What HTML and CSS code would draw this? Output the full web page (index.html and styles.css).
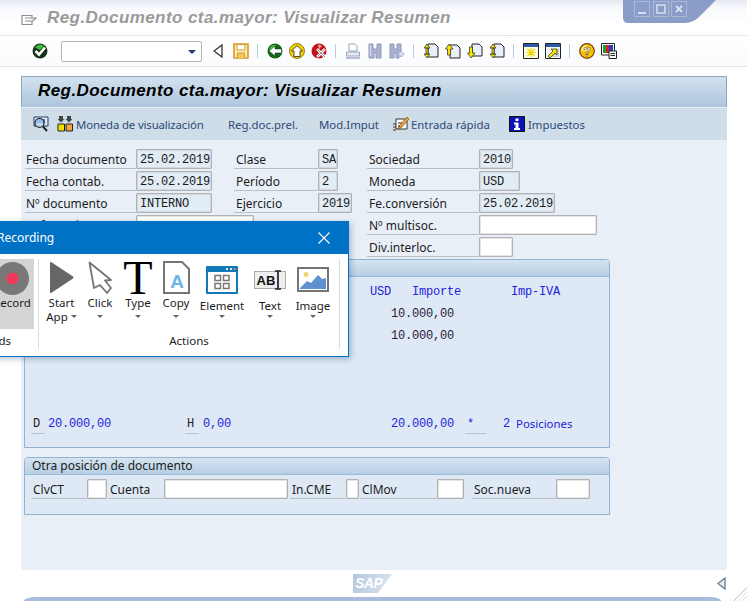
FILE: index.html
```html
<!DOCTYPE html>
<html lang="es">
<head>
  <meta charset="UTF-8">
  <title>Reg.Documento cta.mayor: Visualizar Resumen</title>
  <link rel="stylesheet" href="styles.css">
</head>
<body>
  <svg class="win-controls" width="100" height="24" viewBox="0 0 100 24">
    <path d="M1 0H94L76 18Q70 23 62 23H6Q1 23 1 18Z" fill="#8a9dc8"/>
    <g fill="none" stroke="#a9b7d8">
      <rect x="12.5" y="1.5" width="15" height="15"/>
      <rect x="31.5" y="1.5" width="15" height="15"/>
      <rect x="49.5" y="1.5" width="15" height="15"/>
    </g>
    <path d="M16 13H24" stroke="#d8dfee" stroke-width="2"/>
    <rect x="35" y="5" width="8" height="8" fill="none" stroke="#d8dfee" stroke-width="1.5"/>
    <path d="M54 6L60 12M60 6L54 12" stroke="#d8dfee" stroke-width="2"/>
  </svg>

  <div class="titlebar">
    <svg class="title-icon" width="16" height="12" viewBox="0 0 16 12"><path d="M1 1.5H11V4H15L11 7.5V10.5H1ZM4 4H11M4 7H11" fill="none" stroke="#8f8f8f" stroke-width="1.2"/></svg>
    <span class="title-text">Reg.Documento cta.mayor: Visualizar Resumen</span>
  </div>

  <div class="toolbar">
    <svg class="ico ok-btn" viewBox="0 0 16 16"><circle cx="8" cy="8" r="7.5" fill="#17331a"/><path d="M3 4.5A6 6 0 0 1 12 3L8 7Z" fill="#3ebd3e"/><path d="M3.5 8L7 11.5L13 4.5" fill="none" stroke="#fff" stroke-width="2.6"/></svg>
    <div class="combo"><span class="combo-arrow"></span></div>
    <svg class="ico nav-back" viewBox="0 0 10 14"><path d="M9 1V13L1 7Z" fill="#fff" stroke="#333" stroke-width="1.3"/></svg>
    <svg class="ico save-btn" viewBox="0 0 16 16"><path d="M1 1H15V15H1Z" fill="#fbe9b0" stroke="#d99a2a" stroke-width="1.6"/><path d="M4 1.5H12V7H4Z" fill="#fff" stroke="#d99a2a"/><path d="M4.5 15V10H11.5V15" fill="#f3c766" stroke="#d99a2a"/></svg>
    <span class="sep"></span>
    <div class="tb-group">
      <svg class="ico" viewBox="0 0 16 16"><circle cx="8" cy="8" r="7.5" fill="#0f6a12"/><path d="M2 8A6 6 0 0 1 9 2L6 6Z" fill="#4cc04c"/><path d="M2 8L8 3V6H14.5V10H8V13Z" fill="#fff" stroke="#123" stroke-width=".5"/></svg>
      <svg class="ico" viewBox="0 0 16 16"><circle cx="8" cy="8" r="7.5" fill="#f5d000" stroke="#7a6a00" stroke-width=".8"/><path d="M8 2.5L13.5 8H11V13.5H5V8H2.5Z" fill="#fff" stroke="#222" stroke-width=".8"/></svg>
      <svg class="ico" viewBox="0 0 16 16"><circle cx="8" cy="8" r="7.5" fill="#c4121c"/><path d="M7 1.5A6 6 0 0 1 11 3L8 6Z" fill="#f8a0a0"/><path d="M6 6L14 14M14 6L6 14" stroke="#fff" stroke-width="2.6"/><path d="M6 6L14 14M14 6L6 14" stroke="#555" stroke-width=".6"/></svg>
    </div>
    <span class="sep"></span>
    <div class="tb-group">
      <svg class="ico" viewBox="0 0 16 16"><path d="M4 1H10L12 3V8H4Z" fill="#fff" stroke="#9aa3c0"/><path d="M1.5 9H14.5V13H1.5Z" fill="#e6e9f3" stroke="#9aa3c0"/><path d="M1 15H15" stroke="#9aa3c0" stroke-width="1.4"/></svg>
      <svg class="ico" viewBox="0 0 16 16"><path d="M2 1H6V6H10V1H14V15H9V10H7V15H2Z" fill="#a9b2d0" stroke="#8f99bc"/><path d="M3.5 2V13" stroke="#dfe3f0"/></svg>
      <svg class="ico" viewBox="0 0 16 16"><path d="M1 1H5V6H8V1H12V8H10V15H7V10H5V15H1Z" fill="#a9b2d0" stroke="#8f99bc"/><path d="M12 8V14M9 11H15" stroke="#a9b2d0" stroke-width="2.6"/><path d="M12 9V13M10 11H14" stroke="#eef0f7" stroke-width="1"/></svg>
    </div>
    <span class="sep"></span>
    <div class="tb-group">
      <svg class="ico" viewBox="0 0 16 16"><path d="M5 1H12L15 4V14H5Z" fill="#e9f0fb" stroke="#222"/><path d="M4 1L7 5H1ZM4 15L7 11H1ZM3 5H5V11H3Z" fill="#f6e600" stroke="#222" stroke-width=".7"/></svg>
      <svg class="ico" viewBox="0 0 16 16"><path d="M5 2H12L15 5V15H5Z" fill="#e9f0fb" stroke="#222"/><path d="M4 1L8 6H5.500V12H2.500V6H0.500Z" fill="#f6e600" stroke="#222" stroke-width=".7"/></svg>
      <svg class="ico" viewBox="0 0 16 16"><path d="M5 1H12L15 4V13H5Z" fill="#e9f0fb" stroke="#222"/><path d="M4 15L8 10H5.500V4H2.500V10H0.500Z" fill="#f6e600" stroke="#222" stroke-width=".7"/></svg>
      <svg class="ico" viewBox="0 0 16 16"><path d="M5 1H12L15 4V14H5Z" fill="#e9f0fb" stroke="#222"/><path d="M4 1L7 5H1ZM4 15L7 11H1ZM3 5H5V11H3Z" fill="#f6e600" stroke="#222" stroke-width=".7"/></svg>
    </div>
    <span class="sep"></span>
    <div class="tb-group">
      <svg class="ico" viewBox="0 0 16 16"><path d="M.5.5H15.500V15.500H.5Z" fill="#fffde0" stroke="#222"/><path d="M1 1H15V4H1Z" fill="#2a5caa"/><path d="M8 5V14M3.500 9.500H12.500M4.500 6L11.500 13M11.500 6L4.500 13" stroke="#efd400" stroke-width="1.2"/></svg>
      <svg class="ico" viewBox="0 0 16 16"><path d="M.5.5H15.500V15.500H.5Z" fill="#f4f6fa" stroke="#222"/><path d="M1 1H15V4H1Z" fill="#2a5caa"/><path d="M10 6H14V14H6V12Z" fill="#cfd3d8"/><path d="M3 13L8 8L6 6H12V12L10 10L5 15Z" fill="#f6e600" stroke="#222" stroke-width=".7"/></svg>
    </div>
    <span class="sep"></span>
    <div class="tb-group">
      <svg class="ico" viewBox="0 0 16 16"><circle cx="8" cy="8" r="7.300" fill="#f5c400" stroke="#7a3c00" stroke-width="1.200"/><path d="M2 8A6 6 0 0 1 8 2V8Z" fill="#fdf08a"/><text x="8" y="13" class="help-q">?</text></svg>
      <svg class="ico" viewBox="0 0 16 16"><path d="M.5.5H13.500V12H.5Z" fill="#fff" stroke="#222"/><path d="M2 2H5V10H2Z" fill="#14a02a"/><path d="M5 2H8V10H5Z" fill="#e01b1b"/><path d="M8 2H12V10H8Z" fill="#1f3fd0"/><path d="M8 8H15.500V15.500H8Z" fill="#fff" stroke="#222"/><path d="M9.500 10.500H14M9.500 12.500H14" stroke="#222"/></svg>
    </div>
  </div>

  <div class="main">
    <div class="main-head">Reg.Documento cta.mayor: Visualizar Resumen</div>
    <div class="subbar">
      <svg class="ico sub-search" viewBox="0 0 16 16"><path d="M1 1H15V10H1Z" fill="#dfe8f2" stroke="#26405f"/><path d="M3 3H12V7H3Z" fill="#3d7fd0"/><circle cx="6.500" cy="7" r="4.500" fill="#bcd8f5" fill-opacity=".7" stroke="#222" stroke-width="1.200"/><path d="M10 10.500L14 15" stroke="#222" stroke-width="2"/></svg>
      <svg class="ico sub-currency" viewBox="0 0 16 16"><path d="M2 0H6V3H7.500L4 6.500L.5 3H2ZM10 0H14V3H15.500L12 6.500L8.500 3H10Z" fill="#444"/><path d="M1 8H7.500V15H1Z" fill="#f7e000" stroke="#222"/><path d="M9 8H15.500V15H9Z" fill="#f0a83a" stroke="#222"/></svg>
      <span class="sub-link sub-moneda">Moneda de visualización</span>
      <span class="sub-link sub-prel">Reg.doc.prel.</span>
      <span class="sub-link sub-imput">Mod.Imput</span>
      <svg class="ico sub-entry" viewBox="0 0 16 16"><path d="M3 3H14V13H3Z" fill="#fff" stroke="#333"/><path d="M0 8H3M0 11H3M0 14H3" stroke="#333"/><path d="M6 10L14 1L16 3L8 12L5 13Z" fill="#e8a23a" stroke="#6b4a12" stroke-width=".6"/><path d="M5 7H9M5 10H7" stroke="#333"/></svg>
      <span class="sub-link sub-rapida">Entrada rápida</span>
      <svg class="ico sub-info" viewBox="0 0 16 16"><path d="M.5.5H15.500V15.500H.5Z" fill="#0b12b8" stroke="#111"/><path d="M6.500 2.500H9.500V5H6.500ZM5 6.500H9.500V12H11V14H5V12H6.500V8.500H5Z" fill="#fff"/></svg>
      <span class="sub-link">Impuestos</span>
    </div>

    <div class="fields">
      <div class="col col-a">
        <div class="fld"><span class="lbl lbl-a">Fecha documento</span><span class="box ro w76">25.02.2019</span></div>
        <div class="fld"><span class="lbl lbl-a">Fecha contab.</span><span class="box ro w76">25.02.2019</span></div>
        <div class="fld"><span class="lbl lbl-a">Nº documento</span><span class="box ro w76">INTERNO</span></div>
        <div class="fld"><span class="lbl lbl-a">Referencia</span><span class="box w118"></span></div>
      </div>
      <div class="col col-b">
        <div class="fld"><span class="lbl lbl-b">Clase</span><span class="box ro w20">SA</span></div>
        <div class="fld"><span class="lbl lbl-b">Período</span><span class="box ro w20">2</span></div>
        <div class="fld"><span class="lbl lbl-b">Ejercicio</span><span class="box ro w34">2019</span></div>
      </div>
      <div class="col col-c">
        <div class="fld"><span class="lbl lbl-c">Sociedad</span><span class="box ro w34">2010</span></div>
        <div class="fld"><span class="lbl lbl-c">Moneda</span><span class="box ro w41">USD</span></div>
        <div class="fld"><span class="lbl lbl-c">Fe.conversión</span><span class="box ro w76">25.02.2019</span></div>
        <div class="fld"><span class="lbl lbl-c">Nº multisoc.</span><span class="box w118"></span></div>
        <div class="fld"><span class="lbl lbl-c">Div.interloc.</span><span class="box w34"></span></div>
      </div>
    </div>

    <div class="panel panel-items">
      <div class="panel-head"></div>
      <div class="items">
        <div class="line line-head"><span class="c-usd">USD</span><span class="c-imp">Importe</span><span>Imp-IVA</span></div>
        <div class="line line-amount">10.000,00</div>
        <div class="line line-amount">10.000,00</div>
        <div class="line line-total">
          <span class="mark">D</span><span class="sum sum-d">20.000,00</span>
          <span class="mark">H</span><span class="sum sum-h">0,00</span>
          <span class="sum sum-all">20.000,00</span>
          <span class="mark mark-star">*</span>
          <span class="sum sum-n">2</span><span class="pos-text">Posiciones</span>
        </div>
      </div>
    </div>

    <div class="panel panel-other">
      <div class="panel-head">Otra posición de documento</div>
      <div class="other-row">
        <span class="lbl lbl-clv">ClvCT</span><span class="box w20"></span>
        <span class="lbl lbl-cuenta">Cuenta</span><span class="box w124"></span>
        <span class="lbl lbl-cme">In.CME</span><span class="box w13"></span>
        <span class="lbl lbl-mov">ClMov</span><span class="box w27"></span>
        <span class="lbl lbl-soc">Soc.nueva</span><span class="box w34"></span>
      </div>
    </div>
  </div>

  <div class="bottom">
    <div class="sap-logo">SAP</div>
    <svg class="bottom-arrow" width="9" height="13" viewBox="0 0 9 13"><path d="M8 1V12L1 6.500Z" fill="#e8eef5" stroke="#6d7a88" stroke-width="1.300"/></svg>
  </div>
  <div class="statusbar"></div>
  <div class="grip"></div>

  <!-- floating recorder window -->
  <div class="recorder">
    <div class="rec-title">
      <span class="rec-name">Recording</span>
      <svg class="rec-close" width="12" height="12" viewBox="0 0 12 12"><path d="M.5.5L11.500 11.500M11.500.5L.5 11.500" stroke="#fff" stroke-width="1.100"/></svg>
    </div>
    <div class="ribbon">
      <div class="rib-group rib-commands">
        <div class="rec-btn">
          <svg width="33" height="33" viewBox="0 0 33 33"><circle cx="16.500" cy="16.500" r="16.500" fill="#787878"/><circle cx="16.500" cy="16.500" r="6" fill="#ee3a58"/></svg>
          <span>Record</span>
        </div>
        <div class="rib-label rib-label-cmd">Commands</div>
      </div>
      <div class="rib-group rib-actions">
        <div class="rib-items">
          <div class="act w-start">
            <svg class="act-ico" width="25" height="33" viewBox="0 0 25 33"><path d="M1 2Q1 .5 2.500 1.200L24 15.500Q25 16.500 24 17.500L2.500 31.800Q1 32.500 1 31Z" fill="#666"/></svg>
            <span>Start<br>App<i class="caret caret-in"></i></span>
          </div>
          <div class="act w-std">
            <svg class="act-ico" width="24" height="33" viewBox="0 0 24 33"><path d="M1.500 1.500L6 27L12 24L19 32L23 27L17 19.500L23 19Z" fill="#fff" stroke="#757575" stroke-width="1.800" stroke-linejoin="round"/></svg>
            <span>Click</span><i class="caret"></i>
          </div>
          <div class="act w-std">
            <svg class="act-ico" width="30" height="33" viewBox="0 0 30 33"><text x="15" y="33" class="type-t">T</text></svg>
            <span>Type</span><i class="caret"></i>
          </div>
          <div class="act w-std">
            <svg class="act-ico" width="27" height="33" viewBox="0 0 27 33"><path d="M1 1H19L26 8V32H1Z" fill="#fff" stroke="#757575" stroke-width="2"/><text x="14" y="27" class="copy-a">A</text></svg>
            <span>Copy</span><i class="caret"></i>
          </div>
          <div class="act w-el low">
            <svg class="act-ico" width="32" height="28" viewBox="0 0 32 28"><rect width="32" height="28" rx="1" fill="#1279b8"/><rect x="2" y="6" width="28" height="20" fill="#fff"/><path d="M20 3H22M24 3H26" stroke="#cfe6f5" stroke-width="2"/><path d="M27.500 3H29.500" stroke="#e9748a" stroke-width="2"/><path d="M9 9.500H14.500V14.500H9ZM17.500 9.500H23V14.500H17.500ZM9 17.500H14.500V22.500H9ZM17.500 17.500H23V22.500H17.500Z" fill="none" stroke="#777" stroke-width="1.500"/></svg>
            <span>Element</span><i class="caret"></i>
          </div>
          <div class="act w-tx low">
            <svg class="act-ico" width="32" height="28" viewBox="0 0 32 28"><rect x=".5" y="5.500" width="31" height="17" fill="#eee" stroke="#aaa"/><text x="2.500" y="18.500" class="abi">AB</text><path d="M21 5H27M24 5V23M21 23H27" fill="none" stroke="#222" stroke-width="1.700"/></svg>
            <span>Text</span><i class="caret"></i>
          </div>
          <div class="act w-im low">
            <svg class="act-ico" width="32" height="28" viewBox="0 0 32 28"><rect x="1" y="2" width="30" height="23" fill="#fff" stroke="#757575" stroke-width="2"/><circle cx="9" cy="8.500" r="2.500" fill="#f0d470"/><path d="M3 22L10 15L14 17L21 9L25 13L29 12V23H3Z" fill="#5e90cf"/></svg>
            <span>Image</span><i class="caret"></i>
          </div>
        </div>
        <div class="rib-label">Actions</div>
      </div>
    </div>
  </div>
</body>
</html>
```

FILE: styles.css
```css
html, body {
  margin: 0;
  height: 601px;
}
body {
  position: relative;
  overflow: hidden;
  background: #fff;
  font-family: "Noto Sans", "DejaVu Sans", sans-serif;
  font-size: 12px;
  color: #1c1c1c;
}
svg {
  display: block;
}

/* window title */
.titlebar {
  height: 36px;
  box-sizing: border-box;
  border-bottom: 1px solid #e1e4ea;
  padding: 1px 0 0 21px;
  display: flex;
  align-items: center;
  background: linear-gradient(#e6e9f2 0, #f8f9fc 8px, #fff 24px);
}
.title-icon {
  margin-top: 3px;
}
.title-text {
  margin-left: 10px;
  font-family: "Liberation Sans", sans-serif;
  font-size: 17px;
  font-weight: bold;
  font-style: italic;
  letter-spacing: .42px;
  color: #9a9a9a;
  white-space: nowrap;
}
.win-controls {
  position: absolute;
  top: 0;
  left: 622px;
}

/* main toolbar */
.toolbar {
  height: 31px;
  box-sizing: border-box;
  border-bottom: 1px solid #e1e4ea;
  padding-left: 32px;
  display: flex;
  align-items: center;
  background: linear-gradient(#fff, #fafbfd);
}
.ico {
  width: 16px;
  height: 16px;
  flex: none;
}
.tb-group {
  display: flex;
  gap: 6px;
}
.sep {
  width: 1px;
  height: 14px;
  margin: 0 9px 0 8px;
  background: #b9cde0;
}
.combo {
  width: 141px;
  height: 21px;
  box-sizing: border-box;
  margin-left: 13px;
  border: 1px solid #b4b4b4;
  border-radius: 2px;
  background: #fff;
  position: relative;
}
.combo-arrow {
  position: absolute;
  right: 5px;
  top: 8px;
  border: 4px solid transparent;
  border-top: 4px solid #1f3a6b;
  border-bottom: 0;
}
.nav-back {
  width: 10px;
  height: 14px;
  margin-left: 11px;
}
.save-btn {
  margin-left: 10px;
}

/* content area */
.main {
  margin: 9px 20px 0 21px;
  height: 494px;
  box-sizing: border-box;
  background: #e8eff7;
  border-radius: 0 0 3px 3px;
}
.main-head {
  height: 31px;
  box-sizing: border-box;
  padding: 1px 0 0 16px;
  border: 1px solid #8ba6bf;
  border-bottom: 0;
  background: linear-gradient(#d3e2ef, #adc5dc);
  font-family: "Liberation Sans", sans-serif;
  font-size: 17px;
  font-weight: bold;
  font-style: italic;
  letter-spacing: .42px;
  line-height: 25px;
  color: #000;
  white-space: nowrap;
}
.subbar {
  height: 33px;
  box-sizing: border-box;
  border-top: 1px solid #e8eff6;
  padding-left: 12px;
  display: flex;
  align-items: center;
  background: #cfdde9;
  font-size: 11.4px;
}
.sub-link {
  flex: none;
  color: #2c4a78;
  white-space: nowrap;
}
.sub-currency {
  margin-left: 8px;
}
.sub-moneda {
  width: 152px;
  margin-left: 3px;
  letter-spacing: -.15px;
}
.sub-prel {
  width: 91px;
}
.sub-imput {
  width: 74px;
}
.sub-rapida {
  width: 98px;
  margin-left: 2px;
}
.sub-info {
  margin-right: 3px;
}

/* header fields */
.fields {
  display: flex;
  height: 110px;
  padding: 9px 0 0 4px;
}
.col-a {
  width: 209px;
}
.col-b {
  width: 133px;
}
.fld {
  display: flex;
  height: 20px;
  margin-bottom: 2px;
}
.lbl {
  flex: none;
  box-sizing: border-box;
  height: 20px;
  padding-left: 1px;
  border-bottom: 1px solid #b7c0c9;
  line-height: 21px;
  white-space: nowrap;
}
.lbl-a {
  width: 111px;
}
.lbl-b {
  width: 84px;
  padding-left: 2px;
}
.lbl-c {
  width: 112px;
  padding-left: 2px;
}
.box {
  flex: none;
  box-sizing: border-box;
  height: 20px;
  padding-left: 3px;
  border: 1px solid #b2b2b2;
  box-shadow: inset 0 0 0 1px #e4e4e4;
  border-radius: 1px;
  background: #fff;
  font-family: "Liberation Mono", monospace;
  font-size: 12px;
  letter-spacing: -.2px;
  line-height: 20px;
  color: #1a1a1a;
}
.box.ro {
  background: #e2ecf5;
  box-shadow: inset 0 0 0 1px #d4d8dc;
}
.w13 { width: 13px; }
.w20 { width: 20px; }
.w27 { width: 27px; }
.w34 { width: 34px; }
.w41 { width: 41px; }
.w76 { width: 76px; }
.w118 { width: 118px; }
.w124 { width: 124px; }

/* framed panels */
.panel {
  width: 586px;
  box-sizing: border-box;
  margin-left: 3px;
  border: 1px solid #94b2d2;
  border-radius: 4px 4px 0 0;
  background: #dfe9f5;
}
.panel-head {
  height: 17px;
  box-sizing: border-box;
  border-bottom: 1px solid #9db8d3;
  border-radius: 3px 3px 0 0;
  padding-left: 7px;
  background: linear-gradient(#d6e4f0, #b6cee4);
  line-height: 15px;
}
.panel-items {
  height: 189px;
}
.panel-other {
  height: 58px;
  margin-top: 9px;
}
.items {
  padding-top: 4px;
  font-family: "Liberation Mono", monospace;
  letter-spacing: -.2px;
}
.line {
  height: 22px;
  line-height: 22px;
  white-space: pre;
}
.line-head {
  display: flex;
  padding-left: 345px;
  color: #2222dd;
}
.c-usd {
  width: 42px;
}
.c-imp {
  width: 99px;
}
.line-amount {
  padding-left: 366px;
  color: #2a1a3a;
}
.line-total {
  display: flex;
  margin-top: 66px;
  padding-left: 6px;
  color: #2222dd;
}
.mark {
  width: 14px;
  height: 21px;
  box-sizing: border-box;
  padding-left: 2px;
  border-bottom: 1px solid #b9c3ce;
  color: #222;
}
.mark-star {
  width: 21px;
  color: #2222dd;
}
.sum {
  margin-left: 3px;
}
.sum-d {
  width: 137px;
}
.sum-h {
  width: 188px;
  margin-left: 4px;
}
.sum-all {
  width: 74px;
  margin-left: 0;
}
.sum-n {
  margin-left: 17px;
  width: 13px;
}
.pos-text {
  font-family: "Noto Sans", sans-serif;
  font-size: 11.4px;
  letter-spacing: 0;
}
.other-row {
  display: flex;
  padding: 4px 0 0 6px;
}
.other-row .lbl {
  padding-left: 2px;
}
.lbl-clv { width: 56px; }
.lbl-cuenta { width: 56px; margin-left: 1px; }
.lbl-cme { width: 56px; margin-left: 2px; }
.lbl-mov { width: 77px; margin-left: 1px; }
.lbl-soc { width: 84px; margin-left: 8px; }

/* bottom strip */
.bottom {
  height: 27px;
  display: flex;
  align-items: center;
  justify-content: center;
  position: relative;
}
.sap-logo {
  width: 39px;
  height: 19px;
  padding-left: 2px;
  box-sizing: border-box;
  margin-right: 2px;
  background: linear-gradient(100deg, #b6c8de, #dbe5f0);
  clip-path: polygon(0 0, 100% 0, 64% 100%, 0 100%);
  font-family: "Liberation Sans", sans-serif;
  font-size: 14px;
  font-weight: bold;
  font-style: italic;
  letter-spacing: -.5px;
  line-height: 19px;
  color: #fff;
}
.bottom-arrow {
  position: absolute;
  left: 717px;
  top: 7px;
}
.statusbar {
  height: 4px;
  margin: 0 26px 0 24px;
  border-radius: 12px 12px 0 0 / 4px 4px 0 0;
  background: #a8bbdc;
}
.grip {
  position: absolute;
  right: 0;
  bottom: 0;
  width: 18px;
  height: 16px;
  background: repeating-linear-gradient(135deg, transparent 0 2px, #d6dbe3 2px 3px);
  clip-path: polygon(100% 0, 100% 100%, 0 100%);
}

/* recorder window */
.recorder {
  position: absolute;
  left: -80px;
  top: 221px;
  width: 429px;
  height: 136px;
  box-sizing: border-box;
  border: 1px solid #0072c6;
  background: #fff;
  box-shadow: 2px 2px 6px rgba(40, 80, 130, .35);
  font-size: 11.5px;
}
.rec-title {
  height: 33px;
  margin: -1px -1px 0;
  display: flex;
  align-items: center;
  justify-content: space-between;
  padding: 0 19px 0 77px;
  background: #0072c6;
  color: #fff;
}
.rec-name {
  font-size: 12px;
}
.ribbon {
  display: flex;
  height: 90px;
  margin-top: 5px;
}
.rib-group {
  box-sizing: border-box;
  display: flex;
  flex-direction: column;
  border-right: 1px solid #dcdcdc;
}
.rib-commands {
  width: 118px;
  align-items: flex-end;
  padding-right: 4px;
}
.rec-btn {
  width: 44px;
  height: 70px;
  box-sizing: border-box;
  padding-top: 3px;
  background: #d4d4d4;
  display: flex;
  flex-direction: column;
  align-items: center;
  overflow: hidden;
}
.rec-btn span {
  margin-top: -1px;
  line-height: 17px;
}
.rib-label {
  height: 20px;
  line-height: 24px;
  text-align: center;
  color: #222;
}
.rib-label-cmd {
  width: 100%;
  text-align: right;
  padding-right: 23px;
  box-sizing: border-box;
}
.rib-actions {
  width: 301px;
}
.rib-items {
  display: flex;
  height: 70px;
  padding-left: 3px;
}
.act {
  display: flex;
  flex-direction: column;
  align-items: center;
  padding-top: 2px;
  box-sizing: border-box;
  line-height: 14px;
  text-align: center;
}
.act span {
  margin-top: 2px;
}
.act.low span {
  margin-top: 5px;
}
.act.low .act-ico {
  margin-top: 5px;
}
.act.low .caret {
  margin-top: 2px;
}
.w-start { width: 39px; }
.w-std { width: 38px; }
.w-el { width: 54px; }
.w-tx { width: 42px; }
.w-im { width: 44px; }
.caret {
  display: block;
  margin-top: 5px;
  border: 3.5px solid transparent;
  border-top: 3.5px solid #666;
  border-bottom: 0;
}
.caret-in {
  display: inline-block;
  margin: 0 0 2px 3px;
  vertical-align: middle;
}

/* glyphs inside icons */
.help-q {
  font-family: "Liberation Sans", sans-serif;
  font-size: 13px;
  font-weight: bold;
  text-anchor: middle;
  fill: #fff;
  stroke: #5a2c00;
  stroke-width: .4px;
}
.type-t {
  font-family: "Liberation Serif", serif;
  font-size: 48px;
  text-anchor: middle;
  fill: #000;
}
.copy-a {
  font-family: "Liberation Sans", sans-serif;
  font-size: 19px;
  font-weight: bold;
  text-anchor: middle;
  fill: #6db3e6;
}
.abi {
  font-family: "Liberation Sans", sans-serif;
  font-size: 13px;
  font-weight: bold;
  fill: #111;
}
```
